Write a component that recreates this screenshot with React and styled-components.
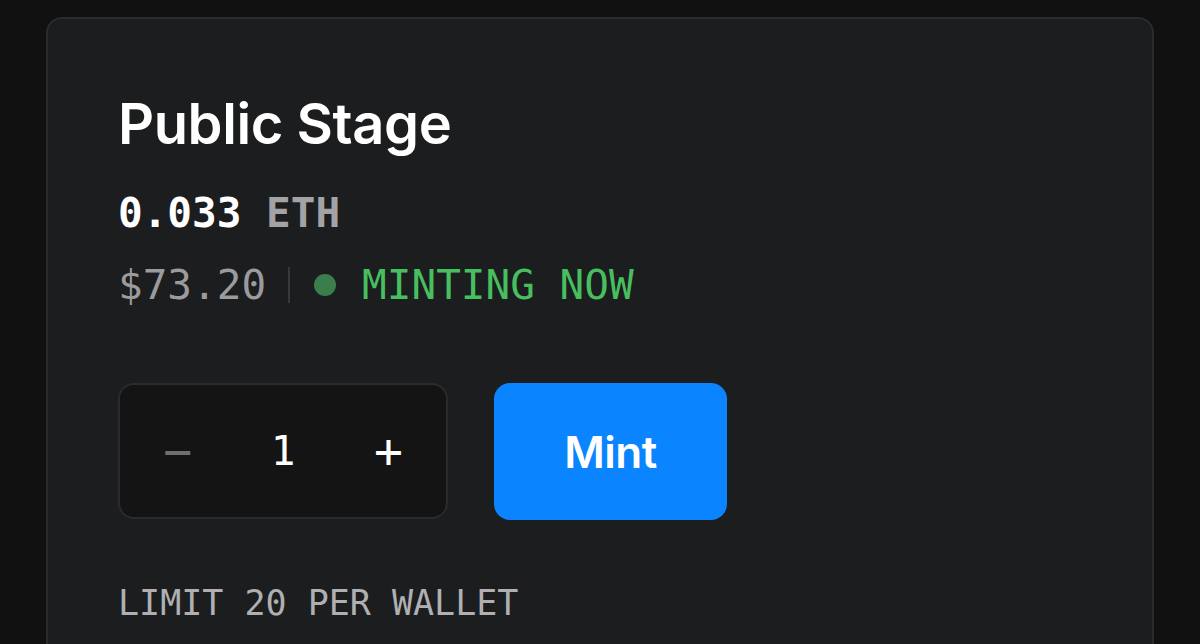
import React, { useState } from 'react';
import styled, { createGlobalStyle } from 'styled-components';

const GlobalStyle = createGlobalStyle`
  html, body {
    margin: 0;
    padding: 0;
    background: #111112;
  }
  * {
    box-sizing: border-box;
  }
`;

const Page = styled.div`
  padding: 17px 46px 0;
  height: 644px;
  overflow: hidden;
`;

const Card = styled.section`
  background: #1c1d1f;
  border: 2px solid #2a2b2e;
  border-radius: 16px;
  min-height: 720px;
  padding: 72px 70px;
  display: flex;
  flex-direction: column;
`;

const Title = styled.h1`
  margin: 0;
  font-family: Inter, "Liberation Sans", sans-serif;
  font-weight: 600;
  font-size: 56px;
  line-height: 66px;
  letter-spacing: -0.4px;
  color: #ffffff;
`;

const Mono = styled.div`
  font-family: "DejaVu Sans Mono", "Liberation Mono", monospace;
  font-size: 41px;
  line-height: 72px;
  display: flex;
  align-items: center;
  white-space: pre;
`;

const Price = styled(Mono)`
  margin-top: 20px;
  font-weight: 700;
  color: #ffffff;
  span {
    color: #a3a3a5;
  }
`;

const Status = styled(Mono)`
  color: #9b9b9d;
`;

const Divider = styled.i`
  display: block;
  width: 2px;
  height: 36px;
  background: #38393c;
  margin: 0 24px 0 22px;
`;

const Dot = styled.i`
  display: block;
  width: 22px;
  height: 22px;
  border-radius: 50%;
  background: #3a7e4b;
  margin-right: 26px;
`;

const Live = styled.span`
  color: #47bf5e;
`;

const Actions = styled.div`
  display: flex;
  gap: 46px;
  margin-top: 62px;
`;

const Stepper = styled.div`
  width: 330px;
  height: 136px;
  background: #141414;
  border: 2px solid #2a2b2e;
  border-radius: 16px;
  display: grid;
  grid-template-columns: 1fr 1fr 1fr;
  align-items: center;
  justify-items: center;
  padding: 0 5px;
`;

const StepBtn = styled.button`
  background: none;
  border: 0;
  padding: 0;
  font-family: "DejaVu Sans Mono", monospace;
  font-size: 48px;
  line-height: 1;
  color: ${(p) => (p.muted ? '#6f6f71' : '#ffffff')};
  cursor: pointer;
`;

const Count = styled.span`
  font-family: "DejaVu Sans Mono", monospace;
  font-size: 41px;
  color: #ffffff;
`;

const MintButton = styled.button`
  width: 233px;
  height: 137px;
  border: 0;
  border-radius: 16px;
  background: #0a84ff;
  color: #ffffff;
  font-family: Inter, "Liberation Sans", sans-serif;
  font-weight: 600;
  font-size: 44px;
  letter-spacing: -0.5px;
  cursor: pointer;
`;

const Limit = styled.div`
  margin-top: 63px;
  font-family: "DejaVu Sans Mono", monospace;
  font-size: 35px;
  color: #b0b0b2;
`;

export default function App() {
  const [qty, setQty] = useState(1);
  return (
    <>
      <GlobalStyle />
      <Page>
        <Card>
          <Title>Public Stage</Title>
          <Price>0.033 <span>ETH</span></Price>
          <Status>
            $73.20
            <Divider />
            <Dot />
            <Live>MINTING NOW</Live>
          </Status>
          <Actions>
            <Stepper>
              <StepBtn muted onClick={() => setQty((q) => Math.max(1, q - 1))}>−</StepBtn>
              <Count>{qty}</Count>
              <StepBtn onClick={() => setQty((q) => Math.min(20, q + 1))}>+</StepBtn>
            </Stepper>
            <MintButton>Mint</MintButton>
          </Actions>
          <Limit>LIMIT 20 PER WALLET</Limit>
        </Card>
      </Page>
    </>
  );
}
